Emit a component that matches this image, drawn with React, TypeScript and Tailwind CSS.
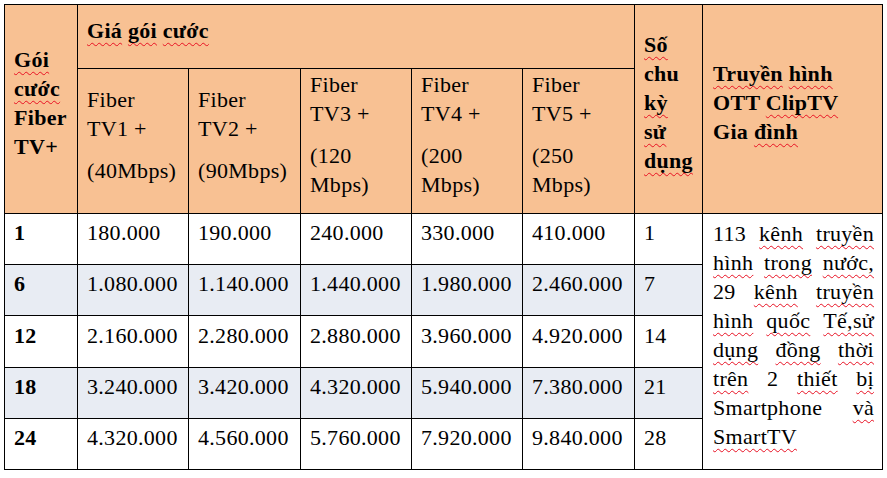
import React from "react";

const W = ({ children }: { children: React.ReactNode }) => (
  <span className="underline decoration-wavy decoration-[#e81123] decoration-1 underline-offset-[4px] [text-decoration-skip-ink:none]">
    {children}
  </span>
);

const P = ({ children, className = "" }: { children: React.ReactNode; className?: string }) => (
  <p className={"mb-[13px] " + className}>{children}</p>
);

const HEAD = "bg-[#f8c193] flex flex-col justify-center pl-[9px] pr-[6px]";

const rows = [
  ["1", "180.000", "190.000", "240.000", "330.000", "410.000", "1"],
  ["6", "1.080.000", "1.140.000", "1.440.000", "1.980.000", "2.460.000", "7"],
  ["12", "2.160.000", "2.280.000", "2.880.000", "3.960.000", "4.920.000", "14"],
  ["18", "3.240.000", "3.420.000", "4.320.000", "5.940.000", "7.380.000", "21"],
  ["24", "4.320.000", "4.560.000", "5.760.000", "7.920.000", "9.840.000", "28"],
];

const tv = [
  ["TV1\u00a0+", "(40Mbps)"],
  ["TV2\u00a0+", "(90Mbps)"],
  ["TV3\u00a0+", "(120 Mbps)"],
  ["TV4\u00a0+", "(200 Mbps)"],
  ["TV5\u00a0+", "(250 Mbps)"],
];

const descLines: React.ReactNode[][] = [
  ["113", <W>kênh</W>, <W>truyền</W>],
  [<W>hình</W>, <W>trong</W>, <W>nước,</W>],
  ["29", <W>kênh</W>, <W>truyền</W>],
  [<W>hình</W>, <W>quốc</W>, <W>Tế,sử</W>],
  [<W>dụng</W>, <W>đồng</W>, <W>thời</W>],
  [<W>trên</W>, "2", <W>thiết</W>, <W>bị</W>],
  ["Smartphone", <W>và</W>],
];

export default function App() {
  return (
    <div className="bg-white w-[887px] h-[478px] pt-[4px] pl-[4px] text-black font-['Liberation_Serif',serif] text-[22px] leading-[29px] tracking-[0.3px]">
      <div className="grid w-fit bg-black p-px gap-px grid-cols-[72px_110px_111px_110px_110px_111px_67px_179px] grid-rows-[63px_144px_50px_50px_51px_50px_50px]">
        <div className={HEAD + " row-span-2 font-bold"}>
          <P>
            <W>Gói</W>
            <br />
            <W>cước</W>
            <br />
            Fiber
            <br />
            TV+
          </P>
        </div>
        <div className={HEAD + " col-span-5 font-bold"}>
          <P>
            <W>Giá</W> <W>gói</W> <W>cước</W>
          </P>
        </div>
        <div className={HEAD + " row-span-2 font-bold"}>
          <P>
            <W>Số</W>
            <br />
            chu
            <br />
            <W>kỳ</W>
            <br />
            <W>sử</W>
            <br />
            <W>dụng</W>
          </P>
        </div>
        <div className={HEAD + " row-span-2 font-bold pl-[10px]"}>
          <P>
            <W>Truyền</W> <W>hình</W> OTT <W>ClipTV</W> Gia <W>đình</W>
          </P>
        </div>
        {tv.map(([a, b]) => (
          <div key={a} className={HEAD}>
            <P>
              Fiber {a}
            </P>
            <P>{b}</P>
          </div>
        ))}
        {rows.map((r, i) => (
          <React.Fragment key={r[0]}>
            {r.map((c, j) => (
              <div
                key={j}
                className={
                  "flex flex-col justify-center pl-[9px] " +
                  (i % 2 === 1 ? "bg-[#e8ecf3] " : "bg-white ") +
                  (j === 0 ? "font-bold" : "")
                }
              >
                <P>{c}</P>
              </div>
            ))}
            {i === 0 && (
              <div className="row-span-5 bg-white flex flex-col justify-center pl-[10px] pr-[8px]">
                <div className="mb-[13px]">
                  {descLines.map((l, k) => (
                    <div key={k} className="flex justify-between">
                      {l.map((w, m) => (
                        <span key={m}>{w}</span>
                      ))}
                    </div>
                  ))}
                  <div>
                    <W>SmartTV</W>
                  </div>
                </div>
              </div>
            )}
          </React.Fragment>
        ))}
      </div>
    </div>
  );
}
